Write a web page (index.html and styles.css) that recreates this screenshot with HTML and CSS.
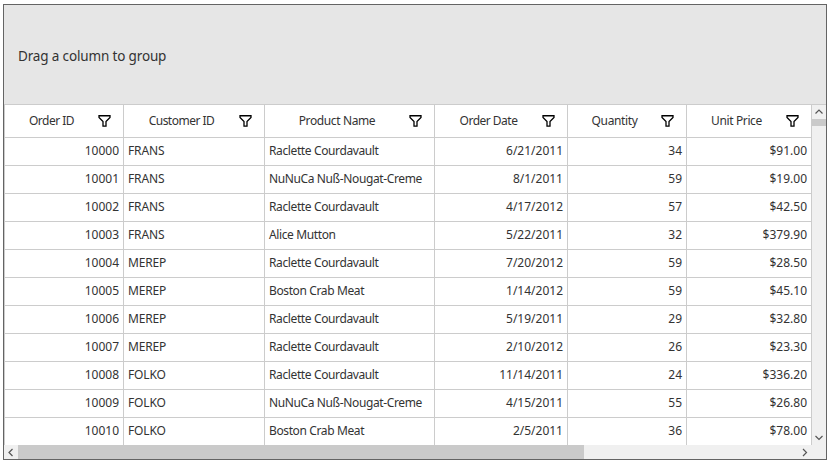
FILE: index.html
```html
<!DOCTYPE html>
<html lang="en">
<head>
<meta charset="utf-8">
<title>Orders</title>
<link rel="stylesheet" href="styles.css">
</head>
<body>
<svg width="0" height="0" class="defs"><symbol id="funnel" viewBox="0 0 13 12"><path d="M1 .75H12V2.5L8 6.5V11.2H5V6.5L1 2.5Z" fill="none" stroke="#000" stroke-width="1.3"/></symbol></svg>
<main class="frame">
  <div class="group-panel">Drag a column to group</div>
  <div class="middle">
    <div class="grid">
      <div class="row head">
        <div><span class="tight">Order ID</span><svg><use href="#funnel"/></svg></div>
        <div><span class="tight">Customer ID</span><svg><use href="#funnel"/></svg></div>
        <div><span>Product Name</span><svg><use href="#funnel"/></svg></div>
        <div><span class="tight">Order Date</span><svg><use href="#funnel"/></svg></div>
        <div><span>Quantity</span><svg><use href="#funnel"/></svg></div>
        <div><span>Unit Price</span><svg><use href="#funnel"/></svg></div>
      </div>
      <div class="row"><div class="num">10000</div><div class="code">FRANS</div><div>Raclette Courdavault</div><div class="num">6/21/2011</div><div class="num">34</div><div class="num">$91.00</div></div>
      <div class="row"><div class="num">10001</div><div class="code">FRANS</div><div>NuNuCa Nuß-Nougat-Creme</div><div class="num">8/1/2011</div><div class="num">59</div><div class="num">$19.00</div></div>
      <div class="row"><div class="num">10002</div><div class="code">FRANS</div><div>Raclette Courdavault</div><div class="num">4/17/2012</div><div class="num">57</div><div class="num">$42.50</div></div>
      <div class="row"><div class="num">10003</div><div class="code">FRANS</div><div>Alice Mutton</div><div class="num">5/22/2011</div><div class="num">32</div><div class="num">$379.90</div></div>
      <div class="row"><div class="num">10004</div><div class="code">MEREP</div><div>Raclette Courdavault</div><div class="num">7/20/2012</div><div class="num">59</div><div class="num">$28.50</div></div>
      <div class="row"><div class="num">10005</div><div class="code">MEREP</div><div>Boston Crab Meat</div><div class="num">1/14/2012</div><div class="num">59</div><div class="num">$45.10</div></div>
      <div class="row"><div class="num">10006</div><div class="code">MEREP</div><div>Raclette Courdavault</div><div class="num">5/19/2011</div><div class="num">29</div><div class="num">$32.80</div></div>
      <div class="row"><div class="num">10007</div><div class="code">MEREP</div><div>Raclette Courdavault</div><div class="num">2/10/2012</div><div class="num">26</div><div class="num">$23.30</div></div>
      <div class="row"><div class="num">10008</div><div class="code">FOLKO</div><div>Raclette Courdavault</div><div class="num">11/14/2011</div><div class="num">24</div><div class="num">$336.20</div></div>
      <div class="row"><div class="num">10009</div><div class="code">FOLKO</div><div>NuNuCa Nuß-Nougat-Creme</div><div class="num">4/15/2011</div><div class="num">55</div><div class="num">$26.80</div></div>
      <div class="row"><div class="num">10010</div><div class="code">FOLKO</div><div>Boston Crab Meat</div><div class="num">2/5/2011</div><div class="num">36</div><div class="num">$78.00</div></div>
    </div>
    <div class="vbar">
      <svg class="arrow" viewBox="0 0 14 14"><path d="M3.5 8.5L7 5L10.5 8.5"/></svg>
      <div class="vthumb"></div>
      <svg class="arrow end" viewBox="0 0 14 14"><path d="M3.5 5L7 8.5L10.5 5"/></svg>
    </div>
  </div>
  <div class="hbar">
    <svg class="arrow" viewBox="0 0 14 14"><path d="M8.5 4L5 7.5L8.5 11"/></svg>
    <div class="hthumb"></div>
    <svg class="arrow right" viewBox="0 0 14 14"><path d="M5 4L8.5 7.5L5 11"/></svg>
  </div>
</main>
</body>
</html>
```
FILE: styles.css
```css
* { box-sizing: border-box; }
body { margin: 0; background: #fff; color: #333; font: 12px/16px "Noto Sans", sans-serif; overflow: hidden; }
.defs { display: block; width: 0; height: 0; }
.frame { margin: 4px 0 0 3px; width: 824px; height: 456px; border: 1px solid #646464; display: flex; flex-direction: column; }
.group-panel { height: 99px; background: #e6e6e6; padding: 2px 14px 0; display: flex; align-items: center; font-size: 13.5px; letter-spacing: -.15px; }
.middle { display: flex; height: 341px; border-top: 1px solid #ccc; }
.grid { width: 808px; border-left: 1px solid #ccc; overflow: hidden; }
.row { display: grid; grid-template-columns: 119px 141px 170px 133px 119px 125px; height: 28px; letter-spacing: -.38px; }
.row > div { border-right: 1px solid #ccc; border-bottom: 1px solid #ccc; padding: 0 4px 1px; display: flex; align-items: center; white-space: nowrap; }
.row:last-child > div { border-bottom: 0; padding-bottom: 2px; }
.row > .num { justify-content: flex-end; letter-spacing: 0; }
.row > .code { letter-spacing: -.15px; }
.head { height: 33px; }
.head > div { padding: 0 12px 0 0; }
.head span { flex: 1; text-align: center; }
.head .tight { letter-spacing: -.5px; }
.head svg { width: 13px; height: 12px; }
.vbar { width: 14px; background: #f0f0f0; display: flex; flex-direction: column; }
.vthumb { height: 7px; background: #cacaca; }
.arrow { width: 14px; height: 14px; flex: none; fill: none; stroke: #555; stroke-width: 1.2; }
.end { margin-top: auto; }
.hbar { height: 14px; background: #f0f0f0; display: flex; }
.hthumb { width: 566px; background: #cacaca; }
.right { margin: 0 14px 0 auto; }
```
